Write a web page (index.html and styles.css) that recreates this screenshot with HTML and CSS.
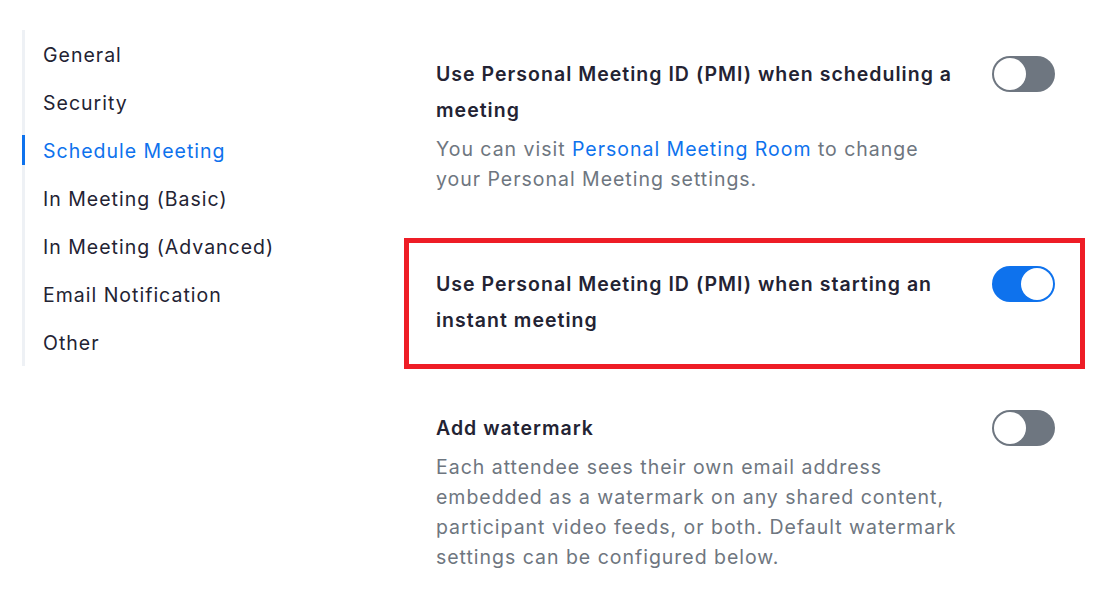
FILE: index.html
```html
<!DOCTYPE html>
<html lang="en">
<head>
<meta charset="utf-8">
<title>Settings</title>
<link rel="stylesheet" href="styles.css">
</head>
<body>
<div class="page">
  <nav class="sidebar">
    <a class="nav-item">General</a>
    <a class="nav-item">Security</a>
    <a class="nav-item active">Schedule Meeting</a>
    <a class="nav-item">In Meeting (Basic)</a>
    <a class="nav-item">In Meeting (Advanced)</a>
    <a class="nav-item">Email Notification</a>
    <a class="nav-item">Other</a>
  </nav>
  <main class="content">
    <section class="setting first">
      <div class="text">
        <div class="title">Use Personal Meeting ID (PMI) when scheduling a meeting</div>
        <div class="desc">You can visit <a class="link">Personal Meeting Room</a> to change your Personal Meeting settings.</div>
      </div>
      <span class="toggle"><span class="knob"></span></span>
    </section>
    <section class="setting highlighted">
      <div class="text">
        <div class="title">Use Personal Meeting ID (PMI) when starting an instant meeting</div>
      </div>
      <span class="toggle on"><span class="knob"></span></span>
    </section>
    <section class="setting">
      <div class="text">
        <div class="title">Add watermark</div>
        <div class="desc">Each attendee sees their own email address embedded as a watermark on any shared content, participant video feeds, or both. Default watermark settings can be configured below.</div>
      </div>
      <span class="toggle"><span class="knob"></span></span>
    </section>
  </main>
</div>
</body>
</html>
```

FILE: styles.css
```css
html, body {
  margin: 0;
  padding: 0;
  background: #ffffff;
}

body {
  font-family: "Inter", "Liberation Sans", sans-serif;
  color: #232333;
  -webkit-font-smoothing: antialiased;
}

.page {
  display: flex;
  align-items: flex-start;
  width: 1095px;
  height: 589px;
  overflow: hidden;
}

.sidebar {
  margin-top: 30px;
  margin-left: 22px;
  width: 360px;
  border-left: 3px solid #eef1f5;
  display: flex;
  flex-direction: column;
}

.nav-item {
  position: relative;
  display: flex;
  align-items: center;
  height: 48px;
  padding-left: 18px;
  padding-top: 2px;
  box-sizing: border-box;
  font-size: 19.5px;
  letter-spacing: 1px;
  color: #232333;
}

.nav-item.active {
  color: #0e72ed;
}

.nav-item.active::before {
  content: "";
  position: absolute;
  left: -3px;
  top: 9px;
  width: 3px;
  height: 30px;
  background: #0e72ed;
}

.content {
  margin-left: 19px;
  width: 681px;
  display: flex;
  flex-direction: column;
}

.setting {
  display: flex;
  justify-content: space-between;
  align-items: flex-start;
  padding: 0 30px 0 32px;
}

.setting.first {
  margin-top: 56px;
}

.setting.highlighted {
  margin-top: 44px;
  border: 5px solid #ee1d26;
  padding: 23px 25px 26px 27px;
  margin-bottom: 41px;
}

.text {
  width: 526px;
}

.title {
  font-size: 19.5px;
  font-weight: 600;
  line-height: 36px;
  letter-spacing: 1.02px;
  color: #232333;
}

.desc {
  margin-top: 6px;
  font-size: 19.5px;
  line-height: 30px;
  letter-spacing: 0.98px;
  color: #6e7680;
}

.link {
  color: #0e72ed;
}

.toggle {
  position: relative;
  flex: none;
  width: 63px;
  height: 36px;
  border-radius: 18px;
  background: #6e7680;
}

.toggle.on {
  background: #0e72ed;
}

.knob {
  position: absolute;
  top: 2px;
  left: 2px;
  width: 32px;
  height: 32px;
  border-radius: 50%;
  background: #ffffff;
}

.toggle.on .knob {
  left: auto;
  right: 2px;
}
```
